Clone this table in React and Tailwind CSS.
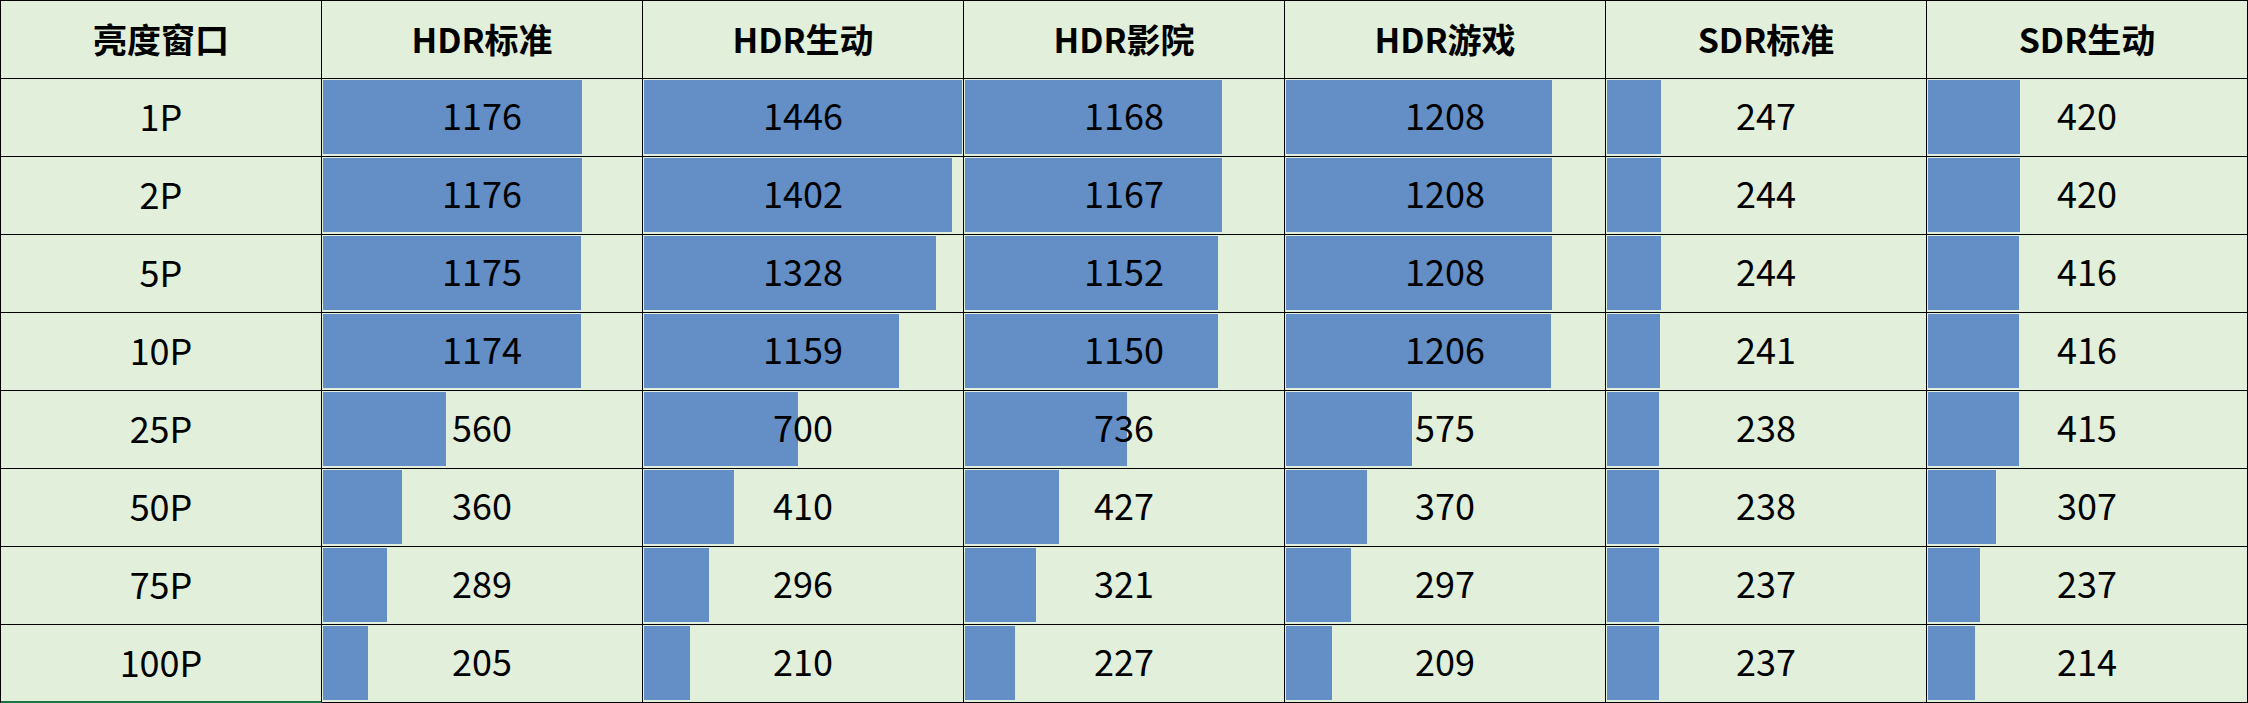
import React from 'react';

const MAX = 1446;

const columns = ['HDR标准', 'HDR生动', 'HDR影院', 'HDR游戏', 'SDR标准', 'SDR生动'];

const rows = [
  { label: '1P', values: [1176, 1446, 1168, 1208, 247, 420] },
  { label: '2P', values: [1176, 1402, 1167, 1208, 244, 420] },
  { label: '5P', values: [1175, 1328, 1152, 1208, 244, 416] },
  { label: '10P', values: [1174, 1159, 1150, 1206, 241, 416] },
  { label: '25P', values: [560, 700, 736, 575, 238, 415] },
  { label: '50P', values: [360, 410, 427, 370, 238, 307] },
  { label: '75P', values: [289, 296, 321, 297, 237, 237] },
  { label: '100P', values: [205, 210, 227, 209, 237, 214] },
];

const font = { fontFamily: '"Noto Sans CJK SC", "Noto Sans", sans-serif' };

const DataCell = ({ value }) => (
  <div className="grid h-[78px] border-r border-b border-black pt-px px-px pb-[2px]">
    <div
      className="col-start-1 row-start-1 h-full bg-[#638EC6]"
      style={{ width: `${(value / MAX) * 100}%` }}
    />
    <span className="col-start-1 row-start-1 place-self-center mb-[6px] text-[36px] leading-none text-black">
      {value}
    </span>
  </div>
);

export default function App() {
  return (
    <div className="w-[2248px] h-[703px] bg-[#E2EFDA]" style={font}>
      <div className="grid grid-cols-7 border-l border-t border-black">
        <div className="flex h-[78px] items-center justify-center border-r border-b border-black pb-[3px] text-[34px] font-bold text-black">
          亮度窗口
        </div>
        {columns.map((c) => (
          <div
            key={c}
            className="flex h-[78px] items-center justify-center border-r border-b border-black pb-[3px] text-[34px] font-bold text-black"
          >
            {c}
          </div>
        ))}

        {rows.map((r, i) => (
          <React.Fragment key={r.label}>
            <div
              className={
                i === rows.length - 1
                  ? 'flex h-[78px] items-center justify-center border-r border-b-2 border-r-black border-b-[#217346] pb-[5px] text-[36px] text-black'
                  : 'flex h-[78px] items-center justify-center border-r border-b border-black pb-[6px] text-[36px] text-black'
              }
            >
              {r.label}
            </div>
            {r.values.map((v, j) => (
              <DataCell key={j} value={v} />
            ))}
          </React.Fragment>
        ))}
      </div>
    </div>
  );
}
